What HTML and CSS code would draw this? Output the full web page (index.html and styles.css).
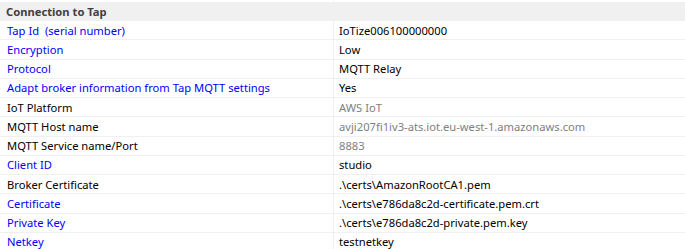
FILE: index.html
```html
<!DOCTYPE html>
<html>
<head>
<meta charset="utf-8">
<link rel="stylesheet" href="styles.css">
</head>
<body>
<div class="grid">
  <div class="top"></div><div class="top right"></div>
  <div class="head">Connection to Tap</div>
  <div class="k blue">Tap Id&nbsp; (serial number)</div><div class="v">IoTize006100000000</div>
  <div class="k blue">Encryption</div><div class="v">Low</div>
  <div class="k blue">Protocol</div><div class="v">MQTT Relay</div>
  <div class="k blue">Adapt broker information from Tap MQTT settings</div><div class="v">Yes</div>
  <div class="k">IoT Platform</div><div class="v gray">AWS IoT</div>
  <div class="k">MQTT Host name</div><div class="v gray">avji207fi1iv3-ats.iot.eu-west-1.amazonaws.com</div>
  <div class="k">MQTT Service name/Port</div><div class="v gray">8883</div>
  <div class="k blue">Client ID</div><div class="v">studio</div>
  <div class="k">Broker Certificate</div><div class="v">.\certs\AmazonRootCA1.pem</div>
  <div class="k blue">Certificate</div><div class="v">.\certs\e786da8c2d-certificate.pem.crt</div>
  <div class="k blue">Private Key</div><div class="v">.\certs\e786da8c2d-private.pem.key</div>
  <div class="k blue">Netkey</div><div class="v">testnetkey</div>
</div>
</body>
</html>
```
FILE: styles.css
```css
html, body {
  margin: 0;
  padding: 0;
  background: #ffffff;
}
body {
  font-family: "Noto Sans", "Open Sans", sans-serif;
  font-size: 11.2px;
  color: #000000;
  overflow: hidden;
}
.grid {
  display: grid;
  grid-template-columns: 334px 1fr;
  grid-auto-rows: 19.25px;
  grid-template-rows: 2px 19px;
}
.top {
  border-right: 1px solid #f0f0f0;
}
.top.right {
  border-right: none;
}
.head {
  grid-column: 1 / 3;
  background: #f0f0f0;
  font-weight: bold;
  color: #404040;
  padding-left: 6px;
  display: flex;
  align-items: center;
}
.k, .v {
  display: flex;
  align-items: center;
  border-bottom: 1px solid #f0f0f0;
  white-space: nowrap;
  overflow: hidden;
}
.k {
  padding-left: 7px;
  border-right: 1px solid #f0f0f0;
}
.v {
  padding-left: 5px;
}
.blue {
  color: #0000ff;
}
.gray {
  color: #808080;
}
```
